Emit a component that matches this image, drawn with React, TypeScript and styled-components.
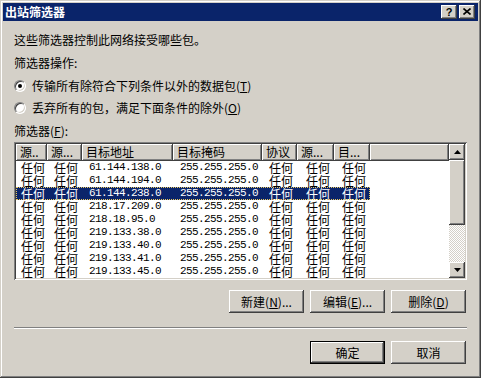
import React from "react";
import styled, { createGlobalStyle, css } from "styled-components";

const GlobalStyle = createGlobalStyle`
  body {
    margin: 0;
    background: #d4d0c8;
    font-family: "Noto Sans CJK SC", "Liberation Sans", sans-serif;
    font-size: 12px;
    color: #000;
  }
`;

const raised = css`
  background: #d4d0c8;
  box-shadow: inset -1px -1px #404040, inset 1px 1px #ffffff,
    inset -2px -2px #808080, inset 2px 2px #d4d0c8;
`;

const Window = styled.div`
  width: 481px;
  height: 378px;
  box-sizing: border-box;
  padding: 3px;
  display: flex;
  flex-direction: column;
  background: #d4d0c8;
  box-shadow: inset -1px -1px #404040, inset 1px 1px #d4d0c8,
    inset -2px -2px #808080, inset 2px 2px #ffffff;
`;

const TitleBar = styled.div`
  height: 18px;
  background: #0a246a;
  display: flex;
  align-items: center;
  justify-content: space-between;
  padding: 0 3px 0 2px;
  color: #fff;
  font-weight: bold;
  line-height: 18px;
`;

const TitleButtons = styled.div`
  display: flex;
  gap: 2px;
`;

const TitleButton = styled.div`
  ${raised};
  width: 16px;
  height: 14px;
  display: flex;
  align-items: center;
  justify-content: center;
  color: #000;
  font-family: "Liberation Sans", sans-serif;
  font-size: 11px;
  font-weight: bold;
  line-height: 14px;
  box-sizing: border-box;
  padding-bottom: 1px;
`;

const Body = styled.div`
  flex: 1;
  display: flex;
  flex-direction: column;
  padding: 0 11px;
`;

const Line = styled.div<{ $top: number }>`
  margin-top: ${(p) => p.$top}px;
  height: 14px;
  line-height: 14px;
  white-space: nowrap;
`;

const RadioRow = styled(Line)`
  display: flex;
  align-items: center;
  gap: 6px;
`;

const Radio = styled.span<{ $checked?: boolean }>`
  position: relative;
  width: 12px;
  height: 12px;
  box-sizing: border-box;
  border-radius: 50%;
  background: #fff;
  border: 1px solid;
  border-color: #808080 #ffffff #ffffff #808080;
  box-shadow: inset 1px 1px #404040, inset -1px -1px #d4d0c8;
  &::after {
    content: "";
    display: ${(p) => (p.$checked ? "block" : "none")};
    position: absolute;
    left: 3px;
    top: 3px;
    width: 4px;
    height: 4px;
    border-radius: 50%;
    background: #000;
  }
`;

const ListBox = styled.div`
  margin-top: 4px;
  height: 138px;
  box-sizing: border-box;
  padding: 2px;
  display: flex;
  background: #fff;
  box-shadow: inset 1px 1px #808080, inset -1px -1px #ffffff,
    inset 2px 2px #404040, inset -2px -2px #d4d0c8;
`;

const Table = styled.div`
  flex: 1;
  overflow: hidden;
  display: flex;
  flex-direction: column;
`;

const HeaderRow = styled.div`
  display: flex;
  height: 17px;
  flex-shrink: 0;
`;

const HeaderCell = styled.div<{ $w?: number }>`
  ${raised};
  ${(p) => (p.$w ? `width: ${p.$w}px;` : "flex: 1;")}
  flex-shrink: 0;
  box-sizing: border-box;
  padding-left: 4px;
  line-height: 16px;
  white-space: nowrap;
`;

const Row = styled.div<{ $selected?: boolean }>`
  display: flex;
  width: 354px;
  height: 13px;
  flex-shrink: 0;
  line-height: 13px;
  ${(p) =>
    p.$selected &&
    css`
      background: #0a246a;
      color: #fff;
      outline: 1px dotted #e8c860;
      outline-offset: -1px;
    `}
`;

const Cell = styled.div<{ $w: number; $pad: number; $mono?: boolean }>`
  width: ${(p) => p.$w}px;
  height: 13px;
  flex-shrink: 0;
  box-sizing: border-box;
  padding-left: ${(p) => p.$pad}px;
  white-space: nowrap;
  ${(p) =>
    p.$mono &&
    css`
      font-family: "Liberation Mono", monospace;
      font-size: 11px;
      letter-spacing: -0.6px;
    `}
`;

const ScrollBar = styled.div`
  width: 16px;
  display: flex;
  flex-direction: column;
`;

const ScrollButton = styled.div`
  ${raised};
  width: 16px;
  height: 16px;
  display: flex;
  align-items: center;
  justify-content: center;
`;

const Thumb = styled.div`
  ${raised};
  height: 65px;
`;

const Track = styled.div`
  flex: 1;
  background: repeating-conic-gradient(#ffffff 0 25%, #d4d0c8 0 50%) 0 0 / 2px
    2px;
`;

const ButtonRow = styled.div<{ $top: number }>`
  margin-top: ${(p) => p.$top}px;
  display: flex;
  justify-content: flex-end;
  gap: 6px;
  padding-right: 1px;
`;

const Button = styled.div<{ $default?: boolean }>`
  ${raised};
  width: 75px;
  height: 23px;
  box-sizing: border-box;
  display: flex;
  align-items: center;
  justify-content: center;
  white-space: nowrap;
  ${(p) =>
    p.$default &&
    css`
      border: 1px solid #000;
    `}
`;

const Separator = styled.div`
  margin-top: 14px;
  height: 2px;
  border-top: 1px solid #808080;
  border-bottom: 1px solid #ffffff;
  box-sizing: border-box;
`;

const columns = [
  { title: "源..", w: 31, pad: 5 },
  { title: "源...", w: 35, pad: 7 },
  { title: "目标地址", w: 91, pad: 7, mono: true },
  { title: "目标掩码", w: 89, pad: 7, mono: true },
  { title: "协议", w: 35, pad: 7 },
  { title: "源...", w: 37, pad: 9 },
  { title: "目...", w: 36, pad: 8 },
];

const addresses = [
  "61.144.138.0",
  "61.144.194.0",
  "61.144.238.0",
  "218.17.209.0",
  "218.18.95.0",
  "219.133.38.0",
  "219.133.40.0",
  "219.133.41.0",
  "219.133.45.0",
  "219.133.46.0",
];

const Arrow = ({ down }: { down?: boolean }) => (
  <svg width="7" height="4" viewBox="0 0 7 4">
    <path d={down ? "M0 0h7L3.5 4z" : "M3.5 0L7 4H0z"} fill="#000" />
  </svg>
);

export default function App() {
  return (
    <>
      <GlobalStyle />
      <Window>
        <TitleBar>
          <span>出站筛选器</span>
          <TitleButtons>
            <TitleButton>?</TitleButton>
            <TitleButton>
              <svg width="8" height="7" viewBox="0 0 8 7">
                <path
                  d="M0.5 0.5L7.5 6.5M7.5 0.5L0.5 6.5"
                  stroke="#000"
                  strokeWidth="1.6"
                />
              </svg>
            </TitleButton>
          </TitleButtons>
        </TitleBar>
        <Body>
          <Line $top={12}>这些筛选器控制此网络接受哪些包。</Line>
          <Line $top={9}>筛选器操作:</Line>
          <RadioRow $top={9}>
            <Radio $checked />
            <span>
              传输所有除符合下列条件以外的数据包(<u>T</u>)
            </span>
          </RadioRow>
          <RadioRow $top={8}>
            <Radio />
            <span>
              丢弃所有的包，满足下面条件的除外(<u>O</u>)
            </span>
          </RadioRow>
          <Line $top={9}>
            筛选器(<u>F</u>):
          </Line>
          <ListBox>
            <Table>
              <HeaderRow>
                {columns.map((c, i) => (
                  <HeaderCell key={i} $w={c.w}>
                    {c.title}
                  </HeaderCell>
                ))}
                <HeaderCell />
              </HeaderRow>
              {addresses.map((addr, i) => (
                <Row key={addr} $selected={i === 2}>
                  {columns.map((c, j) => (
                    <Cell key={j} $w={c.w} $pad={c.pad} $mono={c.mono}>
                      {j === 2 ? addr : j === 3 ? "255.255.255.0" : "任何"}
                    </Cell>
                  ))}
                </Row>
              ))}
            </Table>
            <ScrollBar>
              <ScrollButton>
                <Arrow />
              </ScrollButton>
              <Thumb />
              <Track />
              <ScrollButton>
                <Arrow down />
              </ScrollButton>
            </ScrollBar>
          </ListBox>
          <ButtonRow $top={10}>
            <Button>
              新建(<u>N</u>)...
            </Button>
            <Button>
              编辑(<u>E</u>)...
            </Button>
            <Button>
              删除(<u>D</u>)
            </Button>
          </ButtonRow>
          <Separator />
          <ButtonRow $top={12}>
            <Button $default>确定</Button>
            <Button>取消</Button>
          </ButtonRow>
        </Body>
      </Window>
    </>
  );
}
